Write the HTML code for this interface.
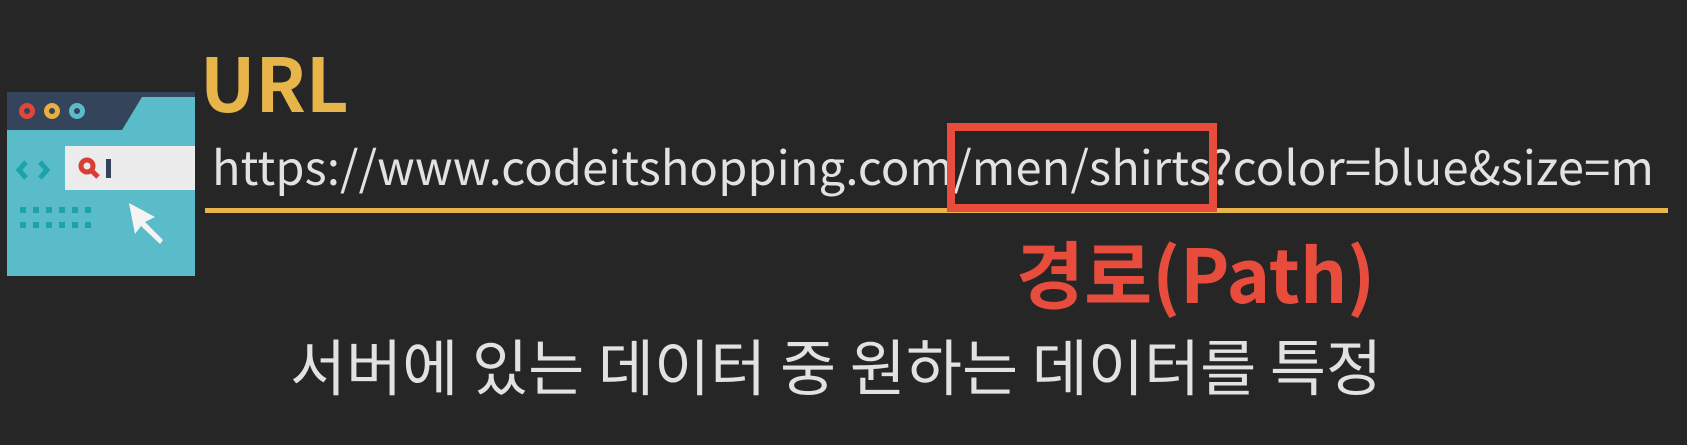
<!DOCTYPE html>
<html><head><meta charset="utf-8"><style>
html,body{margin:0;padding:0;}
body{width:1687px;height:445px;background:#262626;position:relative;overflow:hidden;font-family:"Noto Sans CJK KR","Liberation Sans",sans-serif;}
.a{position:absolute;white-space:nowrap;line-height:1;}
</style></head><body>
<svg class="a" style="left:7px;top:92px" width="188" height="184" viewBox="0 0 188 184">
<rect x="0" y="0" width="188" height="184" fill="#5bbcc9"/>
<path d="M0 0H188V5H135L115 38H0Z" fill="#34445a"/>
<circle cx="20" cy="19" r="8" fill="#e0473a"/><circle cx="20" cy="19" r="3" fill="#34445a"/>
<circle cx="45" cy="19" r="8" fill="#e8b040"/><circle cx="45" cy="19" r="3" fill="#34445a"/>
<circle cx="70" cy="19" r="8" fill="#5bbcc9"/><circle cx="70" cy="19" r="3" fill="#34445a"/>
<rect x="58" y="54" width="130" height="44" fill="#ececec"/>
<circle cx="80" cy="74" r="6" fill="none" stroke="#d83e32" stroke-width="5"/>
<path d="M84 78L91 85" stroke="#d83e32" stroke-width="5"/>
<rect x="99" y="67" width="5" height="19" fill="#34445a"/>
<path d="M19 70L12 78L19 86M33 70L40 78L33 86" fill="none" stroke="#1aa3aa" stroke-width="5"/>
<g fill="#1aa3aa"><rect x="13" y="115" width="6" height="6"/><rect x="26" y="115" width="6" height="6"/><rect x="39" y="115" width="6" height="6"/><rect x="52" y="115" width="6" height="6"/><rect x="65" y="115" width="6" height="6"/><rect x="78" y="115" width="6" height="6"/>
<rect x="13" y="130" width="6" height="6"/><rect x="26" y="130" width="6" height="6"/><rect x="39" y="130" width="6" height="6"/><rect x="52" y="130" width="6" height="6"/><rect x="65" y="130" width="6" height="6"/><rect x="78" y="130" width="6" height="6"/></g>
<path d="M122 111L128 142L134 134L153 152L156 148L138 130L148 125Z" fill="#f4f4f4"/>
</svg>
<div class="a" style="left:200px;top:44px;font-size:74px;font-weight:700;color:#e8b54a;">URL</div>
<div class="a" style="left:212px;top:141px;font-size:47px;color:#e2e2e2;letter-spacing:0.15px">https://www.codeitshopping.com/men/shirts?color=blue&amp;size=m</div>
<div class="a" style="left:205px;top:208px;width:1463px;height:5px;background:#e8b54a"></div>
<div class="a" style="left:947px;top:123px;width:254px;height:73px;border:8px solid #e84c3d"></div>
<div class="a" style="left:1016px;top:235px;font-size:74px;font-weight:700;color:#e84c3d;">경로(Path)</div>
<div class="a" style="left:290px;top:333px;font-size:61px;color:#e2e2e2;">서버에 있는 데이터 중 원하는 데이터를 특정</div>
</body></html>
